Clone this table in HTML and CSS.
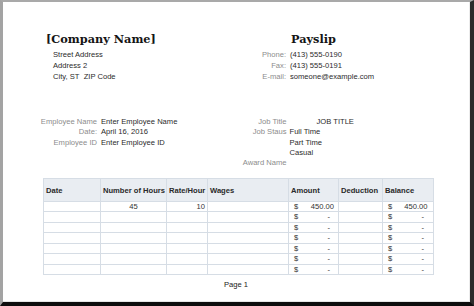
FILE: index.html
```html
<!DOCTYPE html>
<html>
<head>
<meta charset="utf-8">
<link rel="stylesheet" href="styles.css">
</head>
<body>
<div class="window">
  <div class="page">
    <header class="head">
      <div class="company">
        <h1 class="title">[Company Name]</h1>
        <div class="addr">
          <div>Street Address</div>
          <div>Address 2</div>
          <div>City, ST&nbsp; ZIP Code</div>
        </div>
      </div>
      <div class="contact">
        <h1 class="title payslip">Payslip</h1>
        <span class="lbl">Phone:</span><span>(413) 555-0190</span>
        <span class="lbl">Fax:</span><span>(413) 555-0191</span>
        <span class="lbl">E-mail:</span><span>someone@example.com</span>
      </div>
    </header>

    <section class="emp">
      <div class="emp-left">
        <span class="lbl">Employee Name</span><span>Enter Employee Name</span>
        <span class="lbl">Date:</span><span>April 16, 2016</span>
        <span class="lbl">Employee ID</span><span>Enter Employee ID</span>
      </div>
      <div class="emp-right">
        <span class="lbl">Job Title</span><span class="jobtitle">JOB TITLE</span>
        <span class="lbl">Job Staus</span><span>Full Time</span>
        <span class="lbl"></span><span>Part Time</span>
        <span class="lbl"></span><span>Casual</span>
        <span class="lbl">Award Name</span><span></span>
      </div>
    </section>

    <table class="ledger">
      <colgroup>
        <col class="c-date"><col class="c-hours"><col class="c-rate"><col class="c-wages"><col class="c-amount"><col class="c-ded"><col class="c-bal">
      </colgroup>
      <thead>
        <tr><th>Date</th><th>Number of Hours</th><th>Rate/Hour</th><th>Wages</th><th>Amount</th><th>Deduction</th><th>Balance</th></tr>
      </thead>
      <tbody>
        <tr><td></td><td class="center">45</td><td class="right">10</td><td></td><td><div class="acct"><span>$</span><span>450.00</span></div></td><td></td><td><div class="acct bal"><span>$</span><span>450.00</span></div></td></tr>
        <tr><td></td><td></td><td></td><td></td><td><div class="acct dash"><span>$</span><span>-</span></div></td><td></td><td><div class="acct bal dash"><span>$</span><span>-</span></div></td></tr>
        <tr><td></td><td></td><td></td><td></td><td><div class="acct dash"><span>$</span><span>-</span></div></td><td></td><td><div class="acct bal dash"><span>$</span><span>-</span></div></td></tr>
        <tr><td></td><td></td><td></td><td></td><td><div class="acct dash"><span>$</span><span>-</span></div></td><td></td><td><div class="acct bal dash"><span>$</span><span>-</span></div></td></tr>
        <tr><td></td><td></td><td></td><td></td><td><div class="acct dash"><span>$</span><span>-</span></div></td><td></td><td><div class="acct bal dash"><span>$</span><span>-</span></div></td></tr>
        <tr><td></td><td></td><td></td><td></td><td><div class="acct dash"><span>$</span><span>-</span></div></td><td></td><td><div class="acct bal dash"><span>$</span><span>-</span></div></td></tr>
        <tr><td></td><td></td><td></td><td></td><td><div class="acct dash"><span>$</span><span>-</span></div></td><td></td><td><div class="acct bal dash"><span>$</span><span>-</span></div></td></tr>
      </tbody>
    </table>

    <div class="footer">Page 1</div>
  </div>
</div>
</body>
</html>
```
FILE: styles.css
```css
html, body {
  margin: 0;
  padding: 0;
}
body {
  width: 474px;
  height: 306px;
  overflow: hidden;
  background: #111;
  font-family: "Liberation Sans", Arial, sans-serif;
  font-size: 7.6px;
  color: #2b2b2b;
}
.window {
  box-sizing: border-box;
  width: 474px;
  height: 306px;
  border-top: 2px solid #a9a9a9;
  border-left: 3px solid #a3a3a3;
  border-right: 4px solid #2c2c2c;
  border-bottom: 4px solid #0d0d0d;
  background: #fff;
}
.page {
  box-sizing: border-box;
  height: 100%;
  border-right: 1px solid #ececec;
  border-bottom: 1px solid #e4e4e4;
}

/* Header */
.head {
  display: flex;
  padding-top: 29px;
  padding-left: 43px;
}
.company {
  width: 184px;
}
.title {
  margin: 0;
  font-family: "DejaVu Serif", serif;
  font-weight: bold;
  font-size: 11.3px;
  line-height: 16px;
  color: #141414;
}
.addr {
  margin-top: 2px;
  padding-left: 7px;
  line-height: 11px;
}
.contact {
  display: grid;
  grid-template-columns: 56px auto;
  column-gap: 4px;
  line-height: 11px;
  align-content: start;
}
.payslip {
  grid-column: 2;
  margin-bottom: 2px;
  line-height: 16px;
  padding-left: 1px;
}
.lbl {
  color: #8c8c8c;
  text-align: right;
}

/* Employee block */
.emp {
  display: flex;
  margin-top: 35px;
  padding-left: 27px;
  line-height: 10.3px;
}
.emp-left {
  display: grid;
  grid-template-columns: 67px auto;
  column-gap: 4px;
  width: 206px;
  align-content: start;
}
.emp-right {
  display: grid;
  grid-template-columns: 50.5px auto;
  column-gap: 3px;
  align-content: start;
}
.jobtitle {
  padding-left: 27px;
}

/* Table */
.ledger {
  margin-top: 9.6px;
  margin-left: 40px;
  border-collapse: collapse;
  table-layout: fixed;
  width: 390px;
}
.c-date { width: 57px; }
.c-hours { width: 66px; }
.c-rate { width: 41px; }
.c-wages { width: 81px; }
.c-amount { width: 50px; }
.c-ded { width: 44px; }
.c-bal { width: 51px; }

.ledger th,
.ledger td {
  border: 1px solid #d6dde5;
  padding: 0;
}
.ledger th {
  background: #e9edf2;
  height: 22.7px;
  text-align: left;
  font-weight: bold;
  color: #2a2a2a;
  padding: 1px 0 0 2px;
  box-sizing: border-box;
  white-space: nowrap;
}
.ledger td {
  height: 9.5px;
  line-height: 9.5px;
  color: #333;
}
.center { text-align: center; }
.ledger td.right { text-align: right; padding-right: 2px; }

.acct {
  display: flex;
  justify-content: space-between;
  padding: 0 4px 0 5px;
}
.acct.bal {
  padding: 0 5.5px 0 5px;
}
.acct.dash {
  padding-right: 8px;
}
.acct.bal.dash {
  padding-right: 9px;
}

.footer {
  margin-top: 4px;
  line-height: 11px;
  text-align: center;
  color: #222;
}
```
